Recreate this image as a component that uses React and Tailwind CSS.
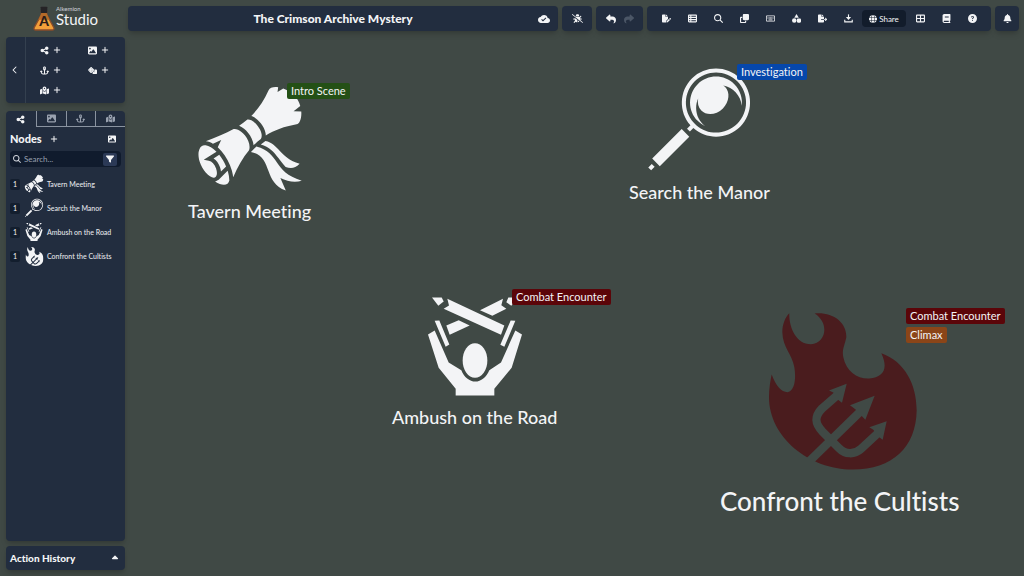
import React from "react";
import {
  FaShareNodes, FaImage, FaAnchor, FaDice, FaMapLocationDot, FaPlus, FaMagnifyingGlass,
  FaFilter, FaChevronLeft, FaCaretUp, FaBugSlash, FaReply, FaShare, FaFilePen, FaTableList,
  FaClone, FaRegKeyboard, FaFileExport, FaGlobe, FaTableCellsLarge,
  FaBook, FaCircleQuestion, FaBell,
} from "react-icons/fa6";
import { MdCloudDone } from "react-icons/md";
import { GiTiedScroll, GiMagnifyingGlass } from "react-icons/gi";

function AmbushIcon({ className }) {
  return (
    <svg viewBox="143 53 282 296" fill="currentColor" className={className} aria-hidden="true">
      <path d="M143 165 L163 153 L205 249 L243 272 C251 293 268 306 285 306 C302 306 318 293 327 272 L362 249 L405 153 L425 165 L394 265 L342 328 V348 H226 V328 L175 265 Z" />
      <ellipse cx="284" cy="243" rx="37" ry="52" />
      <path d="M163 124 L177 123 L207 195 L196 202 Z M391 123 L405 124 L372 202 L360 196 Z" />
      <path d="M155 54 H184 L190 66 L174 79 Z" />
      <path d="M201 58 L372 138 L362 166 L190 88 L206 78 Z" />
      <path d="M368 58 L299 92 L336 109 L378 88 L363 77 Z M384 54 H413 L393 79 L378 68 Z" />
      <path d="M198 138 L235 122 L268 138 L208 166 Z" />
    </svg>
  );
}

function CultIcon({ className, maskId }) {
  return (
    <svg viewBox="179 38 444 470" fill="currentColor" className={className} aria-hidden="true">
      <mask id={maskId} maskUnits="userSpaceOnUse" x="170" y="30" width="460" height="490">
        <rect x="170" y="30" width="460" height="490" fill="white" />
        <g fill="none" stroke="black" strokeWidth="25">
          <path d="M290 492 L460 326" />
          <path d="M384 284 L338 324 C315 348 315 368 340 394 L388 442 C408 463 435 463 455 445 L508 396" />
        </g>
        <path fill="black" d="M496 286 L468 358 L456 345 L438 326 L422 314 Z M412 250 L398 307 L386 298 L372 276 L359 270 Z M532 362 L520 418 L507 408 L492 388 L480 380 Z" />
      </mask>
      <path
        mask={`url(#${maskId})`}
        d="M240 38 C238 75 258 131 305 131 C352 128 360 66 316 39 C370 34 412 65 411 110 C406 135 397 148 402 170 C410 212 445 236 480 234 C522 230 538 205 516 158 C585 182 622 250 622 330 C620 440 550 507 430 507 C300 507 179 410 179 290 C179 265 183 240 187 222 C200 255 215 275 235 275 C258 270 260 230 255 200 C248 160 220 140 219 95 C219 70 228 50 240 38 Z"
      />
    </svg>
  );
}

function DownloadIcon({ className }) {
  return (
    <svg viewBox="0 0 24 24" fill="none" stroke="currentColor" strokeWidth="3" className={className} aria-hidden="true">
      <path d="M12 1 V10" />
      <path d="M5 8 H19 L12 16 Z" fill="currentColor" stroke="none" />
      <path d="M2 15 V21 H22 V15" />
    </svg>
  );
}

function ShapesIcon({ className }) {
  return (
    <svg viewBox="0 0 24 24" fill="currentColor" className={className} aria-hidden="true">
      <path d="M12 0 L18 10 H6 Z" />
      <circle cx="6" cy="17" r="6" />
      <rect x="13" y="12" width="11" height="11" rx="3" />
    </svg>
  );
}

function Flask() {
  return (
    <svg viewBox="0 0 66 76" className="h-[25px] w-[22px]" aria-hidden="true">
      <path d="M25 14 V26 L3 66 Q1 73 8 73 H58 Q65 73 63 66 L41 26 V14 Z" fill="#f2a03a" stroke="#8a4c2a" strokeWidth="4" />
      <path d="M26 20 H40 L50 42 H16 Z" fill="#b56a28" />
      <rect x="23" y="2" width="20" height="19" rx="2" fill="#252326" />
      <text x="33" y="62" textAnchor="middle" fontSize="42" fontWeight="900" fontFamily="Lato, sans-serif" fill="#2a1c19">A</text>
    </svg>
  );
}

const panel = "rounded bg-[#222d3f] shadow-md shadow-black/15";

const addItems = [
  ["Add node", FaShareNodes],
  ["Add image", FaImage],
  ["Add anchor", FaAnchor],
  ["Add dice", FaDice],
  ["Add map", FaMapLocationDot],
];

const tabs = [
  ["Nodes", FaShareNodes],
  ["Images", FaImage],
  ["Anchors", FaAnchor],
  ["Maps", FaMapLocationDot],
];

const nodes = [
  ["Tavern Meeting", <GiTiedScroll className="size-5" />],
  ["Search the Manor", <GiMagnifyingGlass className="size-5" />],
  ["Ambush on the Road", <AmbushIcon className="size-[18px]" />],
  ["Confront the Cultists", <CultIcon className="size-[19px]" maskId="trident-small" />],
];

const toolsLeft = [
  ["Edit document", FaFilePen],
  ["List", FaTableList],
  ["Search", FaMagnifyingGlass],
  ["Duplicate", FaClone],
  ["Shortcuts", FaRegKeyboard],
  ["Shapes", ShapesIcon],
  ["Export", FaFileExport],
  ["Download", DownloadIcon],
];

const toolsRight = [
  ["Layout", FaTableCellsLarge],
  ["Manual", FaBook],
  ["Help", FaCircleQuestion],
];

function Tool({ label, Icon, size = "size-[9px]" }) {
  return (
    <button type="button" aria-label={label} className="flex h-5 w-[26px] shrink-0 items-center justify-center">
      <Icon className={size} />
    </button>
  );
}

function Tag({ color, children }) {
  return <span className={`rounded-xs px-1 text-[11px] leading-4 whitespace-nowrap ${color}`}>{children}</span>;
}

function Sidebar() {
  return (
    <aside className="flex w-[119px] shrink-0 flex-col">
      <div className="flex h-[31px] items-start justify-center">
        <Flask />
        <div className="flex flex-col pl-px">
          <span className="text-[6px] leading-[6px] text-gray-300">Alkemion</span>
          <span className="text-[15px] leading-[15px] text-gray-100">Studio</span>
        </div>
      </div>

      <div className={`flex h-[66px] ${panel}`}>
        <button type="button" aria-label="Collapse" className="flex w-5 items-center justify-center border-r border-[#34404f] pr-px">
          <FaChevronLeft className="size-2" />
        </button>
        <div className="grid flex-1 grid-cols-2 content-center pr-[2px]">
          {addItems.map(([label, Icon]) => (
            <button key={label} type="button" aria-label={label} className="flex h-5 items-center justify-center gap-1">
              <Icon className="size-[9px]" />
              <FaPlus className="size-2" />
            </button>
          ))}
        </div>
      </div>

      <section className={`mt-2 flex flex-1 flex-col ${panel}`}>
        <div role="tablist" className="grid h-4 grid-cols-4">
          {tabs.map(([label, Icon], i) => (
            <button
              key={label}
              type="button"
              role="tab"
              aria-label={label}
              aria-selected={i === 0}
              className={`flex items-center justify-center ${i === 0 ? "" : "border-b border-l border-[#8a93a0] text-gray-400"}`}
            >
              <Icon className="size-[9px]" />
            </button>
          ))}
        </div>
        <div className="flex h-6 items-center pr-[9px] pl-1">
          <h2 className="text-[11px] font-black">Nodes</h2>
          <button type="button" aria-label="Add node" className="ml-2"><FaPlus className="size-2" /></button>
          <FaImage className="ml-auto size-2" />
        </div>
        <div className="mx-1 flex h-4 items-center rounded bg-[#101b2d] pl-[3px] text-gray-300">
          <FaMagnifyingGlass className="size-2 shrink-0" />
          <input aria-label="Search nodes" placeholder="Search..." className="w-0 flex-1 bg-transparent pl-[3px] text-[8px] outline-none placeholder:text-gray-400" />
          <button type="button" aria-label="Filter" className="mr-1 flex h-[13px] w-[14px] items-center justify-center rounded-xs bg-[#2b3956] text-gray-100">
            <FaFilter className="size-2" />
          </button>
        </div>
        <ul className="mt-[5px] px-1">
          {nodes.map(([name, icon]) => (
            <li key={name} className="flex h-6 items-center">
              <span className="flex h-[11px] w-[10px] items-center justify-center rounded-xs bg-[#131e2e] text-[7px]">1</span>
              <span className="ml-1 flex w-5 justify-center">{icon}</span>
              <span className="ml-[3px] text-[7px] font-medium whitespace-nowrap text-gray-200">{name}</span>
            </li>
          ))}
        </ul>
      </section>

      <button type="button" className={`mt-[5px] flex h-6 items-center justify-between pr-[5px] pl-1 ${panel}`}>
        <span className="text-[10px] font-black">Action History</span>
        <FaCaretUp className="size-[10px]" />
      </button>
    </aside>
  );
}

function TopBar() {
  return (
    <header className="flex h-[25px] gap-1">
      <div className={`flex flex-1 items-center pr-2 ${panel}`}>
        <h1 className="flex-1 text-center text-[12px] font-black">The Crimson Archive Mystery</h1>
        <MdCloudDone className="size-3" />
      </div>
      <div className={`flex items-center px-[2px] ${panel}`}>
        <Tool label="Disable effects" Icon={FaBugSlash} size="size-[11px]" />
      </div>
      <div className={`flex items-center px-[6px] ${panel}`}>
        <button type="button" aria-label="Undo" className="flex w-[18px] justify-center"><FaReply className="size-[10px]" /></button>
        <button type="button" aria-label="Redo" disabled className="flex w-[17px] justify-center text-[#4b5666]"><FaShare className="size-[10px]" /></button>
      </div>
      <div className={`flex items-center px-[6px] ${panel}`}>
        {toolsLeft.map(([label, Icon]) => <Tool key={label} label={label} Icon={Icon} />)}
        <button type="button" className="mx-px flex h-[17px] w-[44px] items-center justify-center gap-[2px] rounded bg-[#121c2b] text-[8px]">
          <FaGlobe className="size-2" />
          Share
        </button>
        {toolsRight.map(([label, Icon]) => <Tool key={label} label={label} Icon={Icon} />)}
      </div>
      <div className={`flex items-center ${panel}`}>
        <button type="button" aria-label="Notifications" className="flex w-6 justify-center"><FaBell className="size-[9px]" /></button>
      </div>
    </header>
  );
}

function CanvasNode({ place, icon, title, size, tags, tagPlace }) {
  return (
    <article className={`absolute flex flex-col items-center ${place}`}>
      {icon}
      <h3 className={`font-medium whitespace-nowrap ${size}`}>{title}</h3>
      <div className={`absolute flex flex-col items-start gap-[3px] ${tagPlace}`}>
        {tags.map(([text, color]) => <Tag key={text} color={color}>{text}</Tag>)}
      </div>
    </article>
  );
}

export default function App() {
  return (
    <div className="flex min-h-screen gap-[3px] bg-[#404945] pt-[6px] pr-[5px] pb-[6px] pl-[6px] font-['Lato',sans-serif] text-gray-100 [font-variant-ligatures:none]">
      <Sidebar />
      <div className="flex min-w-0 flex-1 flex-col">
        <TopBar />
        <main className="relative flex-1">
          <CanvasNode
            place="top-[52px] left-[60px]"
            icon={<GiTiedScroll className="size-[112px]" />}
            title="Tavern Meeting"
            size="mt-1 text-[18px] leading-6"
            tags={[["Intro Scene", "bg-[#245016]"]]}
            tagPlace="top-0 left-[99px]"
          />
          <CanvasNode
            place="top-[33px] left-[501px]"
            icon={<GiMagnifyingGlass className="size-[112px]" />}
            title="Search the Manor"
            size="mt-1 text-[18px] leading-6"
            tags={[["Investigation", "bg-[#0647ab]"]]}
            tagPlace="top-0 left-[108px]"
          />
          <CanvasNode
            place="top-[266px] left-[264px]"
            icon={<AmbushIcon className="h-[99px] w-[94px]" />}
            title="Ambush on the Road"
            size="mt-[9px] text-[18px] leading-6"
            tags={[["Combat Encounter", "bg-[#5b0509]"]]}
            tagPlace="top-[-8px] left-[120px]"
          />
          <CanvasNode
            place="top-[282px] left-[592px]"
            icon={<CultIcon className="ml-[7px] h-[157px] w-[148px] text-[#4a1c1e]" maskId="trident-large" />}
            title="Confront the Cultists"
            size="mt-[13px] text-[26px] leading-9"
            tags={[["Combat Encounter", "bg-[#5b0509]"], ["Climax", "bg-[#8b4518]"]]}
            tagPlace="top-[-5px] left-[186px]"
          />
        </main>
      </div>
    </div>
  );
}
